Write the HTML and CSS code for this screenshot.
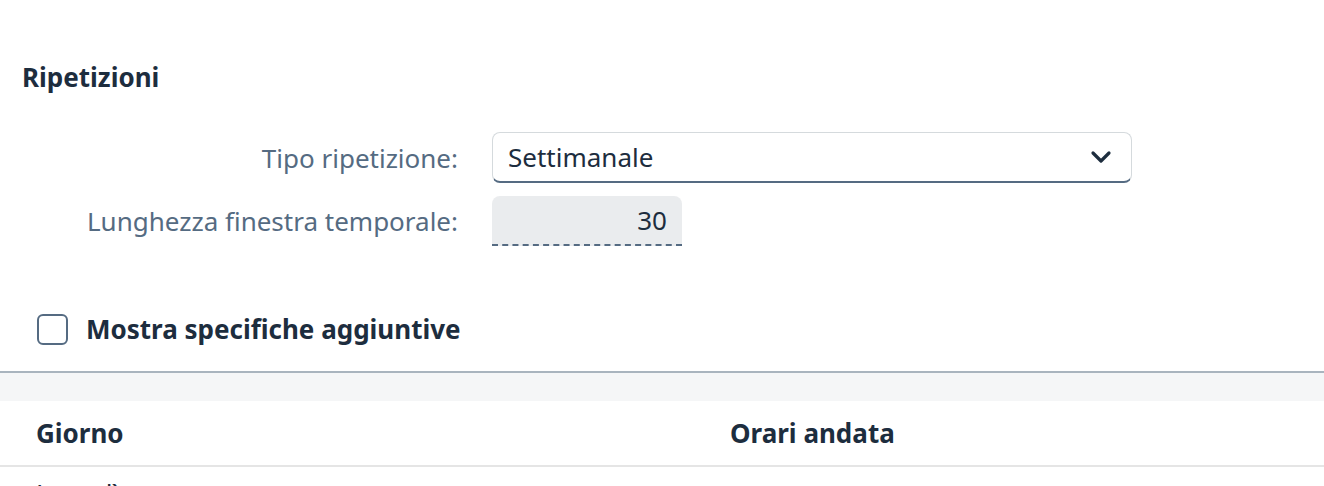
FILE: index.html
```html
<!DOCTYPE html>
<html lang="it">

<head>
    <meta charset="UTF-8">
    <meta name="viewport" content="width=device-width, initial-scale=1.0">
    <title>Ripetizioni</title>
    <link rel="stylesheet" href="styles.css">
</head>

<body>
    <div class="panel">
        <h2 class="title">Ripetizioni</h2>

        <div class="form">
            <label class="label">Tipo ripetizione:</label>
            <div class="select">
                <span>Settimanale</span>
                <svg class="chevron" width="22" height="14" viewBox="0 0 22 14">
                    <path d="M3 3 L11 11 L19 3" fill="none" stroke="#1d2d3e" stroke-width="3.2"
                        stroke-linecap="round" stroke-linejoin="round" />
                </svg>
            </div>

            <label class="label">Lunghezza finestra temporale:</label>
            <div class="input-ro">30</div>
        </div>
    </div>

    <div class="check-row">
        <span class="checkbox"></span>
        <span class="check-label">Mostra specifiche aggiuntive</span>
    </div>

    <div class="table">
        <div class="toolbar"></div>
        <div class="thead">
            <div class="col-day">Giorno</div>
            <div class="col-time">Orari andata</div>
        </div>
        <div class="trow">
            <div class="col-day">Lunedì</div>
            <div class="col-time"></div>
        </div>
    </div>
</body>

</html>
```

FILE: styles.css
```css
body {
    margin: 0;
    background: #fff;
    font-family: "Noto Sans", "Liberation Sans", sans-serif;
    color: #1d2d3e;
    overflow: hidden;
}

.panel {
    padding: 62px 0 0 22px;
}

.title {
    margin: 0;
    font-size: 26px;
    font-weight: 700;
    line-height: 30px;
}

.form {
    display: grid;
    grid-template-columns: 436px 640px;
    column-gap: 34px;
    row-gap: 13px;
    margin-top: 40px;
    align-items: center;
}

.label {
    text-align: right;
    font-size: 26px;
    color: #556b82;
}

.select {
    height: 51px;
    box-sizing: border-box;
    border: 1px solid #d5dadd;
    border-bottom: 2px solid #556b82;
    border-radius: 8px;
    display: flex;
    align-items: center;
    justify-content: space-between;
    padding: 0 19px 0 15px;
    font-size: 26px;
}

.input-ro {
    width: 190px;
    height: 50px;
    box-sizing: border-box;
    background: #eaecee;
    border-radius: 8px 8px 0 0;
    border-bottom: 2px dashed #556b82;
    text-align: right;
    padding-right: 15px;
    line-height: 48px;
    font-size: 26px;
}

.check-row {
    display: flex;
    align-items: center;
    padding-left: 37px;
    height: 50px;
    margin-top: 58px;
}

.checkbox {
    width: 27px;
    height: 27px;
    border: 2px solid #556b82;
    border-radius: 6px;
}

.check-label {
    margin-left: 18px;
    font-size: 26px;
    font-weight: 700;
}

.table {
    margin-top: 17px;
    border-top: 2px solid #a9b4be;
}

.toolbar {
    height: 28px;
    background: #f5f6f7;
}

.thead,
.trow {
    display: flex;
    font-size: 26px;
}

.thead {
    height: 64px;
    align-items: center;
    font-weight: 700;
    border-bottom: 2px solid #e5e5e5;
}

.trow {
    height: 60px;
    padding-top: 8px;
}

.col-day {
    width: 694px;
    padding-left: 36px;
}
```
